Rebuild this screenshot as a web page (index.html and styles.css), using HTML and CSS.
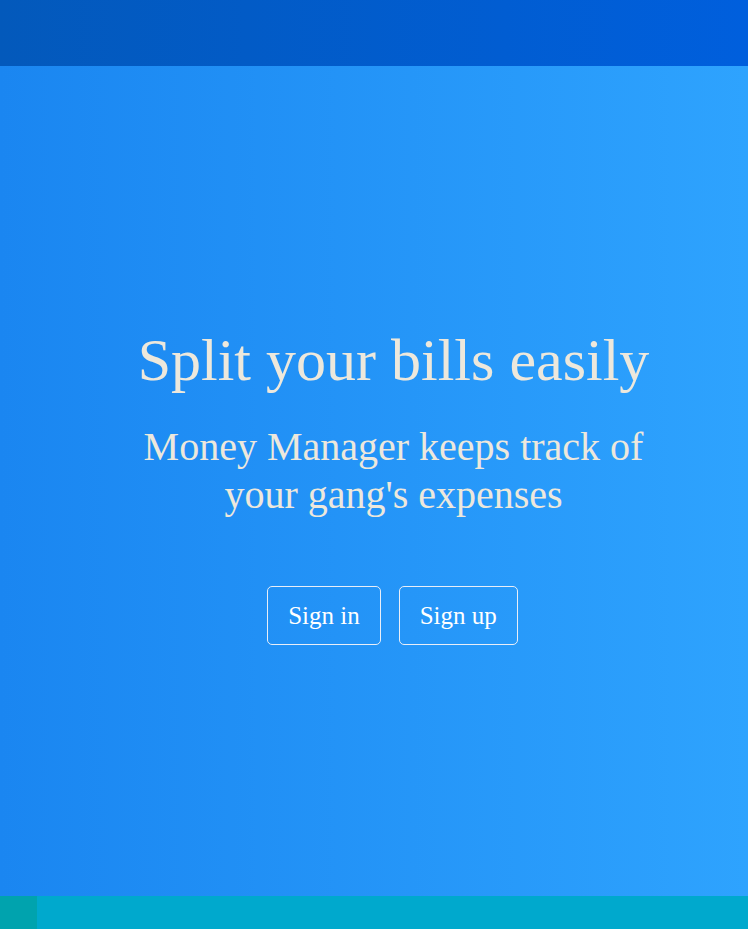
FILE: index.html
```html
<!DOCTYPE html>
<html lang="en">
<head>
<meta charset="utf-8">
<title>Money Manager</title>
<link rel="stylesheet" href="styles.css">
</head>
<body>
<div class="page">
  <header class="topbar"></header>
  <main class="hero">
    <div class="hero-content">
      <h1 class="hero-title">Split your bills easily</h1>
      <p class="hero-subtitle">Money Manager keeps track of your gang's expenses</p>
      <div class="hero-actions">
        <a class="btn" href="#">Sign in</a>
        <a class="btn" href="#">Sign up</a>
      </div>
    </div>
  </main>
  <footer class="footer">
    <div class="footer-square"></div>
  </footer>
</div>
</body>
</html>
```

FILE: styles.css
```css
html, body {
  margin: 0;
  padding: 0;
  height: 100%;
}

body {
  font-family: "Liberation Serif", "Times New Roman", serif;
  overflow: hidden;
}

.page {
  display: flex;
  flex-direction: column;
  height: 929px;
}

.topbar {
  height: 66px;
  flex: none;
  background: linear-gradient(90deg, #0359bb 0%, #005fdd 100%);
}

.hero {
  flex: 1;
  display: flex;
  align-items: center;
  justify-content: center;
  padding-left: 39px;
  padding-top: 9px;
  box-sizing: border-box;
  background: linear-gradient(90deg, #1a86f1 0%, #2ea3fe 100%);
}

.hero-content {
  display: flex;
  flex-direction: column;
  align-items: center;
  text-align: center;
}

.hero-title {
  margin: 0;
  font-size: 60px;
  font-weight: normal;
  line-height: 69px;
  color: #ede8dc;
}

.hero-subtitle {
  margin: 28px 0 0;
  width: 530px;
  font-size: 40px;
  line-height: 48px;
  color: #ede8dc;
}

.hero-actions {
  display: flex;
  gap: 18px;
  margin-top: 67px;
  margin-right: 2px;
}

.btn {
  display: block;
  padding: 14px 20px;
  font-size: 25px;
  line-height: 29px;
  color: #ffffff;
  text-decoration: none;
  border: 1px solid #e8eef8;
  border-radius: 5px;
}

.footer {
  height: 33px;
  flex: none;
  display: flex;
  background: #00a9cd;
}

.footer-square {
  width: 37px;
  background: #00a3ae;
}
```
